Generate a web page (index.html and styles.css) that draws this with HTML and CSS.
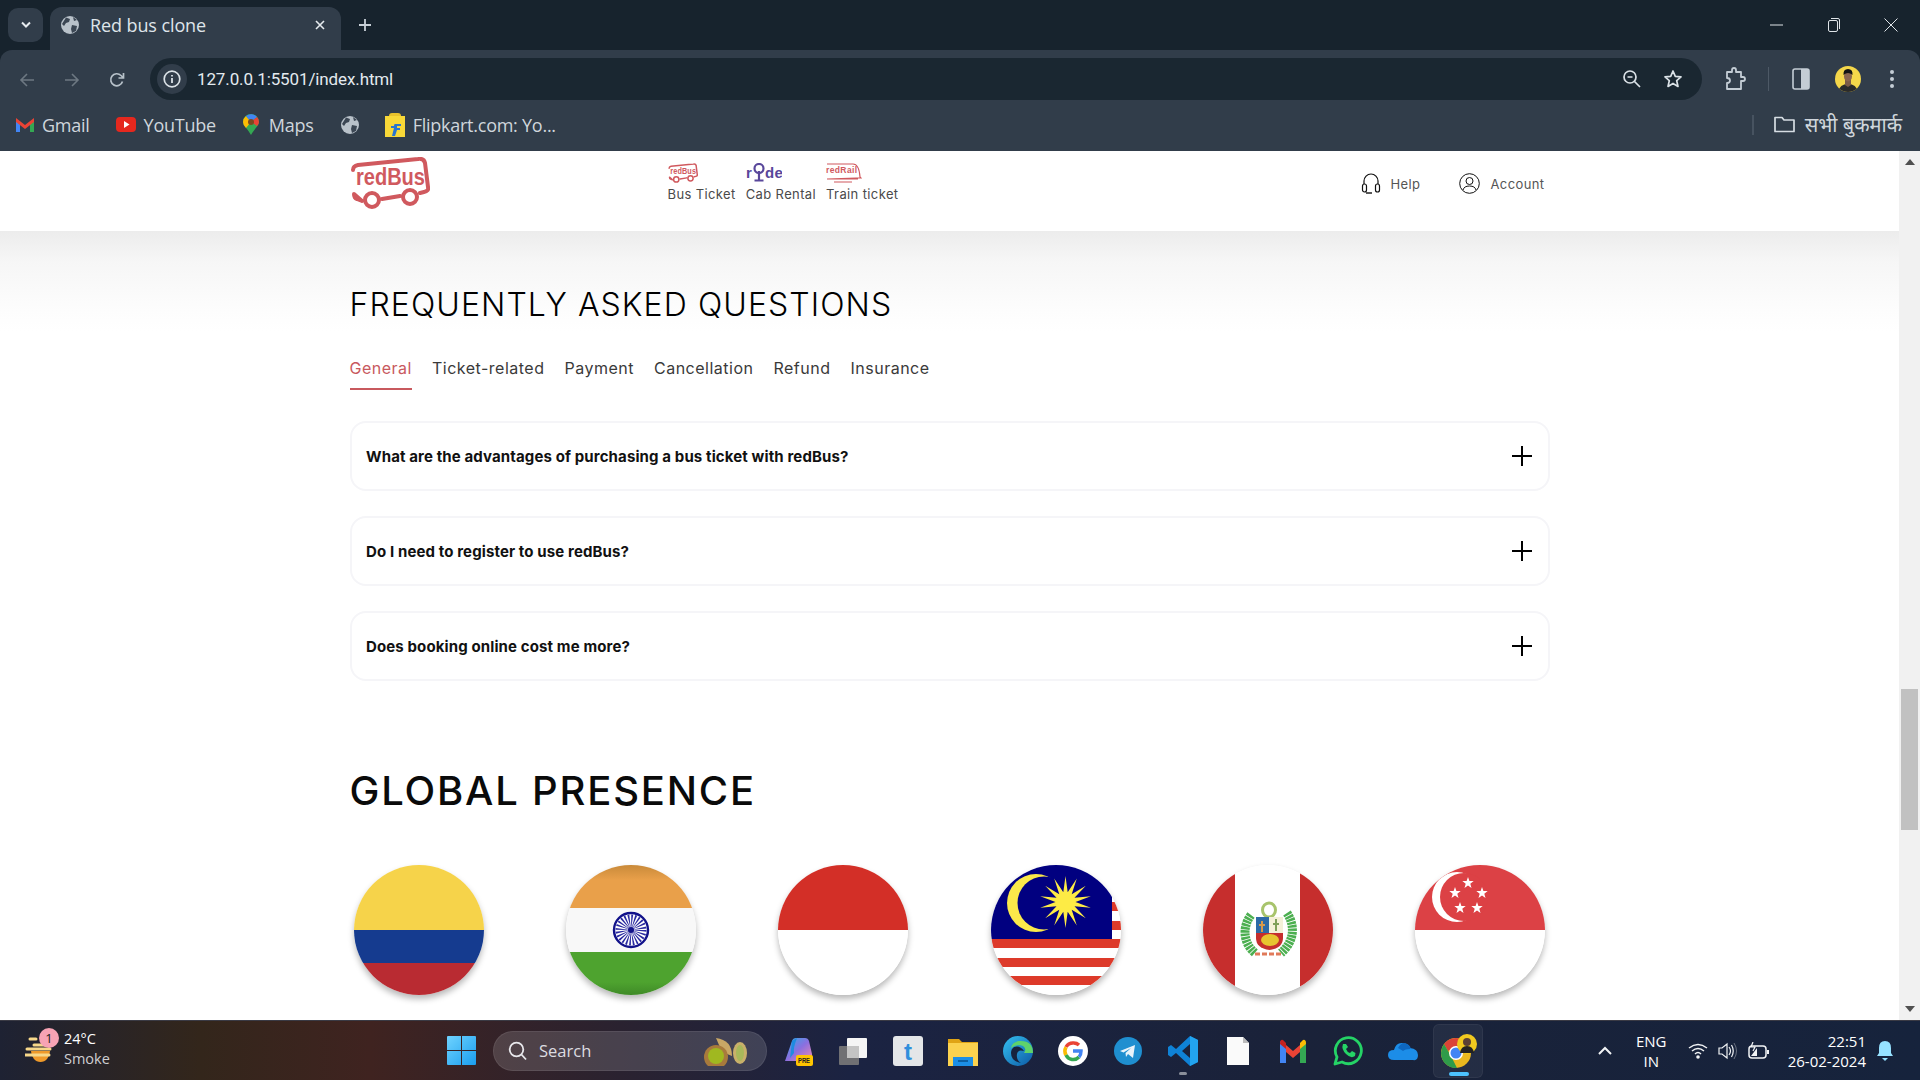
FILE: index.html
```html
<!DOCTYPE html>
<html lang="en">
<head>
<meta charset="utf-8">
<title>Red bus clone</title>
<link rel="stylesheet" href="styles.css">
</head>
<body>
<svg class="defs" width="0" height="0" aria-hidden="true">
  <symbol id="globe" viewBox="0 0 18 18">
    <circle cx="9" cy="9" r="9" fill="#b9c2ca"/>
    <path d="M5 1.5 9 3 8 6 5 7 3 10 1 8ZM11 9l5 1-1 5-4 2-1-4ZM12 1l4 3-3 1Z" fill="#3b4653"/>
  </symbol>
  <symbol id="busmark" viewBox="0 0 80 52">
    <path d="M3 13Q3 9 8 8L68 2Q74 1 75 6L78 30Q79 34 74 35L70 36M50 39 32 42M12 44 7 42Q4 41 4 37Z" fill="none" stroke="currentColor" stroke-width="4" stroke-linejoin="round" stroke-linecap="round"/>
    <circle cx="22" cy="43" r="7" fill="#fff" stroke="currentColor" stroke-width="4"/>
    <circle cx="60" cy="40" r="7" fill="#fff" stroke="currentColor" stroke-width="4"/>
    <text x="6" y="28" class="logo-text" textLength="69" lengthAdjust="spacingAndGlyphs">redBus</text>
  </symbol>
</svg>

<div class="tabstrip">
  <button class="tab-search" aria-label="Search tabs"><svg width="12" height="8" viewBox="0 0 12 8"><path d="M2 1.5 6 5.5 10 1.5" fill="none" stroke="#e6ebef" stroke-width="2"/></svg></button>
  <div class="tab">
    <svg class="ic18" width="18" height="18"><use href="#globe"/></svg>
    <span class="tab-title">Red bus clone</span>
    <svg class="tab-close" width="10" height="10" viewBox="0 0 10 10"><path d="M1 1 9 9M9 1 1 9" stroke="#e6ebef" stroke-width="1.6"/></svg>
  </div>
  <svg class="tab-new" width="14" height="14" viewBox="0 0 14 14"><path d="M7 1V13M1 7H13" stroke="#c8d0d7" stroke-width="1.8"/></svg>
  <div class="win-controls">
    <svg width="14" height="14" viewBox="0 0 14 14"><path d="M0 7H13" stroke="#dfe4e8" stroke-width="1"/></svg>
    <svg width="14" height="16" viewBox="0 0 14 16"><rect x="1.5" y="3.5" width="9" height="11" rx="1.5" fill="none" stroke="#dfe4e8"/><path d="M4 1.5H11Q12.5 1.5 12.5 3V12" fill="none" stroke="#dfe4e8"/></svg>
    <svg width="14" height="14" viewBox="0 0 14 14"><path d="M.5.5 13.5 13.5M13.5.5.5 13.5" stroke="#dfe4e8"/></svg>
  </div>
</div>

<div class="toolbar">
  <div class="nav-buttons">
    <svg width="16" height="16" viewBox="0 0 16 16"><path d="M15 8H2M8 2 2 8 8 14" fill="none" stroke="#6d7882" stroke-width="1.6"/></svg>
    <svg width="16" height="16" viewBox="0 0 16 16"><path d="M1 8H14M8 2 14 8 8 14" fill="none" stroke="#6d7882" stroke-width="1.6"/></svg>
    <svg width="16" height="16" viewBox="0 0 16 16"><path d="M13.5 9.5A6 6 0 1 1 12 3.5L14 5.5M14.5 1V6H9.5" fill="none" stroke="#b7c1c9" stroke-width="1.7"/></svg>
  </div>
  <div class="omnibox">
    <span class="site-info"><svg width="18" height="18" viewBox="0 0 18 18"><circle cx="9" cy="9" r="7.8" fill="none" stroke="#dbe2e7" stroke-width="1.7"/><path d="M9 8V13M9 5V6.6" stroke="#dbe2e7" stroke-width="1.8"/></svg></span>
    <span class="url">127.0.0.1:5501/index.html</span>
    <span class="omni-end">
      <svg width="20" height="20" viewBox="0 0 20 20"><circle cx="8" cy="8" r="6" fill="none" stroke="#dbe2e7" stroke-width="1.7"/><path d="M5.5 8H10.5M12.5 12.5 18 18" stroke="#dbe2e7" stroke-width="1.7"/></svg>
      <svg width="20" height="20" viewBox="0 0 20 20"><path d="M10 2 12.3 7.4 18 7.9 13.7 11.7 15 17.4 10 14.4 5 17.4 6.3 11.7 2 7.9 7.7 7.4Z" fill="none" stroke="#dbe2e7" stroke-width="1.7" stroke-linejoin="round"/></svg>
    </span>
  </div>
  <div class="tool-end">
    <svg class="t-ext" width="22" height="24" viewBox="0 0 22 24"><path d="M2 5H7V3Q7 1 9 1T11 3V5H16V10H18Q20 10 20 12T18 14H16V22H2V16Q5 16 5 13.5T2 11Z" fill="none" stroke="#c4cdd5" stroke-width="1.8" stroke-linejoin="round"/></svg>
    <span class="t-sep"></span>
    <svg class="t-side" width="18" height="22" viewBox="0 0 18 22"><rect x="1" y="1" width="16" height="20" rx="2" fill="none" stroke="#c4cdd5" stroke-width="1.6"/><rect x="9" y="1" width="8" height="20" fill="#c4cdd5"/></svg>
    <svg class="t-avatar" width="26" height="26" viewBox="0 0 26 26"><defs><clipPath id="avc"><circle cx="13" cy="13" r="13"/></clipPath></defs><g clip-path="url(#avc)"><rect width="26" height="26" fill="#f5d74a"/><path d="M3 27Q4 18 13 18T23 27Z" fill="#2a2a2a"/><path d="M10 13H16V19L13 21 10 19Z" fill="#7a5a48"/><ellipse cx="13" cy="10.500" rx="4" ry="5" fill="#8a6650"/><path d="M8.500 9Q8 3 13 3T17.500 9Q13 5 8.500 9Z" fill="#141414"/></g></svg>
    <svg class="t-menu" width="6" height="22" viewBox="0 0 6 22"><circle cx="3" cy="4" r="2" fill="#c4cdd5"/><circle cx="3" cy="11" r="2" fill="#c4cdd5"/><circle cx="3" cy="18" r="2" fill="#c4cdd5"/></svg>
  </div>
</div>

<div class="bookmarks">
  <span class="bm bm-gmail">
    <svg width="18" height="15" viewBox="0 0 18 15"><path d="M0 2V15H4V6Z" fill="#4285f4"/><path d="M18 2V15H14V6Z" fill="#34a853"/><path d="M0 1 9 8 18 1V5L9 12 0 5Z" fill="#ea4335"/></svg>
    Gmail</span>
  <span class="bm bm-yt">
    <svg width="20" height="15" viewBox="0 0 20 15"><rect width="20" height="15" rx="4" fill="#e5281e"/><path d="M8 4V11L13.5 7.5Z" fill="#fff"/></svg>
    YouTube</span>
  <span class="bm bm-maps">
    <svg width="16" height="21" viewBox="0 0 16 21"><path d="M8 21C5 15 0 12 0 8A8 8 0 0 1 16 8C16 12 11 15 8 21Z" fill="#34a853"/><path d="M0 8A8 8 0 0 1 3 2L8 8 3 14Q0 11 0 8Z" fill="#fbbc04"/><path d="M3 2A8 8 0 0 1 14 3L8 8Z" fill="#4285f4"/><path d="M14 3Q16 5 16 8 16 10 14 12L8 8Z" fill="#ea4335"/><circle cx="8" cy="8" r="3" fill="#7a4a20"/></svg>
    Maps</span>
  <svg class="bm-globe" width="18" height="18"><use href="#globe"/></svg>
  <span class="bm bm-flip">
    <svg width="20" height="24" viewBox="0 0 20 24"><rect y="3" width="20" height="21" fill="#f8d838"/><path d="M4 3Q4 0 7 0H13Q16 0 16 3Z" fill="#e9c22c"/><path d="M10 11H16V13H12V15H15V17H12L10 23H7L9 15H6V13H9Q9 11 10 11Z" fill="#2874d0"/></svg>
    Flipkart.com: Yo...</span>
  <span class="bm-spacer"></span>
  <span class="bm-sep"></span>
  <span class="bm bm-all">
    <svg width="21" height="17" viewBox="0 0 21 17"><path d="M1 15.5V1.500H8L10 4H20V15.500Z" fill="none" stroke="#d6dde3" stroke-width="1.7" stroke-linejoin="round"/></svg>
    सभी बुकमार्क</span>
</div>

<div class="viewport">
  <div class="page">
    <header class="site-header">
      <div class="container header-row">
        <svg class="logo" width="80" height="52"><use href="#busmark"/></svg>
        <nav class="products">
          <a class="product"><svg class="busicon" width="30" height="20"><use href="#busmark"/></svg><span>Bus Ticket</span></a>
          <a class="product">
            <svg class="prod-ic" width="36" height="20" viewBox="0 0 36 20"><text x="0" y="15" class="ryde">r</text><circle cx="13" cy="5.500" r="4.500" fill="none" stroke="#59479b" stroke-width="2.200"/><path d="M13 8V17.500M8.500 17.500H17.500" stroke="#59479b" stroke-width="2.200"/><text x="19" y="15" class="ryde">de</text></svg>
            <span>Cab Rental</span></a>
          <a class="product">
            <svg class="prod-ic" width="36" height="20" viewBox="0 0 36 20"><path d="M1 1H27Q33 1 34 14L35 15H30L1 16M3 16H32M8 19H26" fill="none" stroke="#d0595e" stroke-width="1.2"/><text x="0" y="10" class="rail">redRail</text></svg>
            <span>Train ticket</span></a>
        </nav>
        <div class="header-actions">
          <a class="action"><svg width="20" height="21" viewBox="0 0 20 21"><path d="M3 11V8A7 7 0 0 1 17 8V11" fill="none" stroke="#111" stroke-width="1.2"/><rect x="1.500" y="11" width="4" height="8" rx="2" fill="none" stroke="#111" stroke-width="1.2"/><rect x="14.500" y="11" width="4" height="8" rx="2" fill="none" stroke="#111" stroke-width="1.2"/><path d="M5 20H11" stroke="#111" stroke-width="1.4"/></svg><span>Help</span></a>
          <a class="action"><svg width="21" height="21" viewBox="0 0 21 21"><circle cx="10.500" cy="10.500" r="9.800" fill="none" stroke="#111" stroke-width="1"/><circle cx="10.500" cy="8" r="3.500" fill="none" stroke="#111" stroke-width="1"/><path d="M4 17Q5 13 10.500 13T17 17" fill="none" stroke="#111"/></svg><span>Account</span></a>
        </div>
      </div>
    </header>

    <main class="content">
      <section class="container faq">
        <h2 class="faq-title">FREQUENTLY ASKED QUESTIONS</h2>
        <ul class="faq-tabs">
          <li class="faq-tab is-active">General</li>
          <li class="faq-tab">Ticket-related</li>
          <li class="faq-tab">Payment</li>
          <li class="faq-tab">Cancellation</li>
          <li class="faq-tab">Refund</li>
          <li class="faq-tab">Insurance</li>
        </ul>
        <div class="faq-list">
          <div class="faq-item"><span>What are the advantages of purchasing a bus ticket with redBus?</span><svg width="20" height="20" viewBox="0 0 20 20"><path d="M10 0V20M0 10H20" stroke="#000" stroke-width="2"/></svg></div>
          <div class="faq-item"><span>Do I need to register to use redBus?</span><svg width="20" height="20" viewBox="0 0 20 20"><path d="M10 0V20M0 10H20" stroke="#000" stroke-width="2"/></svg></div>
          <div class="faq-item"><span>Does booking online cost me more?</span><svg width="20" height="20" viewBox="0 0 20 20"><path d="M10 0V20M0 10H20" stroke="#000" stroke-width="2"/></svg></div>
        </div>
      </section>

      <section class="container global">
        <h2 class="global-title">GLOBAL PRESENCE</h2>
        <div class="flags">
          <svg class="flag" viewBox="0 0 130 130"><rect width="130" height="65" fill="#f6d34a"/><rect y="65" width="130" height="33" fill="#153b8f"/><rect y="98" width="130" height="32" fill="#b92b32"/></svg>
          <svg class="flag" viewBox="0 0 130 130">
            <defs>
              <linearGradient id="saffron" x1="0" y1="0" x2="0" y2="1"><stop offset="0" stop-color="#c98a3a"/><stop offset=".35" stop-color="#e9a04a"/></linearGradient>
              <linearGradient id="greenb" x1="0" y1="0" x2="0" y2="1"><stop offset=".7" stop-color="#4ea32f"/><stop offset="1" stop-color="#3f8a27"/></linearGradient>
            </defs>
            <rect width="130" height="43" fill="url(#saffron)"/><rect y="43" width="130" height="44" fill="#f8f8f8"/><rect y="87" width="130" height="43" fill="url(#greenb)"/>
            <circle cx="65" cy="65" r="17" fill="#fff" stroke="#12128a" stroke-width="2.4"/>
            <circle cx="65" cy="65" r="8" fill="none" stroke="#2a2aa0" stroke-width="15" stroke-dasharray="1 1.09"/>
            <circle cx="65" cy="65" r="3" fill="#12128a"/>
          </svg>
          <svg class="flag" viewBox="0 0 130 130"><rect width="130" height="65" fill="#d32f27"/><rect y="65" width="130" height="65" fill="#fff"/></svg>
          <svg class="flag" viewBox="0 0 130 130">
            <rect width="130" height="130" fill="#fff"/>
            <rect x="121" y="37" width="9" height="9" fill="#dd3a2a"/><rect x="121" y="56" width="9" height="9" fill="#dd3a2a"/>
            <rect y="74" width="130" height="9" fill="#dd3a2a"/><rect y="93" width="130" height="9" fill="#dd3a2a"/><rect y="111" width="130" height="9" fill="#dd3a2a"/>
            <rect width="121" height="74" fill="#010080"/>
            <circle cx="45" cy="38" r="29" fill="#fbe94a"/><circle cx="53" cy="38" r="26.500" fill="#010080"/>
            <polygon transform="translate(74.500 37)" fill="#fdeb45" points="0,-26 2.200,-9.700 11.300,-23.400 6.200,-7.800 20.300,-16.200 9,-4.300 25.300,-5.800 10,0 25.300,5.800 9,4.300 20.300,16.200 6.200,7.800 11.300,23.400 2.200,9.700 0,26 -2.200,9.700 -11.300,23.400 -6.200,7.800 -20.300,16.200 -9,4.300 -25.300,5.800 -10,0 -25.300,-5.800 -9,-4.300 -20.300,-16.200 -6.200,-7.800 -11.300,-23.400 -2.200,-9.700"/>
          </svg>
          <svg class="flag" viewBox="0 0 130 130">
            <rect width="130" height="130" fill="#fff"/>
            <rect width="32" height="130" fill="#c62e2d"/><rect x="97" width="33" height="130" fill="#c62e2d"/>
            <path d="M48 50C39 62 40 78 52 88" fill="none" stroke="#4caf50" stroke-width="9" stroke-dasharray="2.500 .8"/>
            <path d="M84 48C92 60 92 76 78 88" fill="none" stroke="#4caf50" stroke-width="9" stroke-dasharray="2.500 .8"/>
            <ellipse cx="66" cy="45" rx="6.500" ry="7" fill="none" stroke="#a8c46c" stroke-width="3"/>
            <rect x="53" y="52" width="13" height="16" fill="#2d6aa6"/><rect x="66" y="52" width="14" height="16" fill="#f4f0d8"/>
            <path d="M59 56V67M62 60H56" stroke="#d99a4a" stroke-width="2"/>
            <path d="M73 54V66M70 59H76" stroke="#7f9f5a" stroke-width="2"/>
            <path d="M53 68H80V73Q80 83 66.500 85 53 83 53 73Z" fill="#c62e2d"/>
            <ellipse cx="67" cy="75" rx="9" ry="6" fill="#e7c42f"/>
            <path d="M52 89H80" stroke="#e07a5a" stroke-width="3" stroke-dasharray="5 2"/>
          </svg>
          <svg class="flag" viewBox="0 0 130 130">
            <rect width="130" height="65" fill="#dc4145"/><rect y="65" width="130" height="65" fill="#fff"/>
            <circle cx="42" cy="32" r="25" fill="#fff"/><circle cx="49" cy="32" r="24" fill="#dc4145"/>
            <g fill="#fff">
              <polygon transform="translate(53 18)" points="0,-6 1.400,-2 5.700,-1.900 2.300,.8 3.500,4.900 0,2.500 -3.500,4.900 -2.300,.8 -5.700,-1.900 -1.400,-2"/>
              <polygon transform="translate(40 28)" points="0,-6 1.400,-2 5.700,-1.900 2.300,.8 3.500,4.900 0,2.500 -3.500,4.900 -2.300,.8 -5.700,-1.900 -1.400,-2"/>
              <polygon transform="translate(67 28)" points="0,-6 1.400,-2 5.700,-1.900 2.300,.8 3.500,4.900 0,2.500 -3.500,4.900 -2.300,.8 -5.700,-1.900 -1.400,-2"/>
              <polygon transform="translate(45 43)" points="0,-6 1.400,-2 5.700,-1.900 2.300,.8 3.500,4.900 0,2.500 -3.500,4.900 -2.300,.8 -5.700,-1.900 -1.400,-2"/>
              <polygon transform="translate(62 43)" points="0,-6 1.400,-2 5.700,-1.900 2.300,.8 3.500,4.900 0,2.500 -3.500,4.900 -2.300,.8 -5.700,-1.900 -1.400,-2"/>
            </g>
          </svg>
        </div>
      </section>
    </main>
  </div>

  <div class="scrollbar">
    <svg class="sb-arrow" width="10" height="6" viewBox="0 0 10 6"><path d="M5 0 10 6H0Z" fill="#505050"/></svg>
    <div class="sb-track"><div class="sb-thumb"></div></div>
    <svg class="sb-arrow" width="10" height="6" viewBox="0 0 10 6"><path d="M5 6 0 0H10Z" fill="#505050"/></svg>
  </div>
</div>

<footer class="taskbar">
  <div class="weather">
    <svg class="w-icon" width="30" height="28" viewBox="0 0 30 28"><path d="M6 14A9.500 11 0 0 0 25 14Z" fill="#ef9a2a"/><path d="M5 2H11M9 8H26M2 12H25M0 18H24" stroke="#f7d88a" stroke-width="3" stroke-linecap="round"/></svg>
    <span class="w-badge">1</span>
    <div class="w-text"><span class="w-temp">24°C</span><span class="w-desc">Smoke</span></div>
  </div>
  <svg class="start" width="29" height="29" viewBox="0 0 29 29"><defs><linearGradient id="win" x1="0" y1="0" x2="1" y2="1"><stop offset="0" stop-color="#6fd3ff"/><stop offset="1" stop-color="#1a9dee"/></linearGradient></defs><path d="M0 1Q0 0 1 0H14V14H0ZM15 0H28Q29 0 29 1V14H15ZM0 15H14V29H1Q0 29 0 28ZM15 15H29V28Q29 29 28 29H15Z" fill="url(#win)"/></svg>
  <div class="search">
    <svg width="20" height="20" viewBox="0 0 20 20"><circle cx="8.500" cy="8.500" r="6.800" fill="none" stroke="#e8e8ec" stroke-width="1.800"/><path d="M13 13 18 18.500" stroke="#e8e8ec" stroke-width="1.800"/></svg>
    <span class="search-label">Search</span>
    <svg class="nuts" width="50" height="30" viewBox="0 0 50 30"><ellipse cx="38" cy="17" rx="7" ry="11" fill="#c9b06a"/><ellipse cx="38" cy="17" rx="4" ry="8" fill="#a8b85a"/><path d="M14 2Q30 4 30 20L20 16Z" fill="#c9a765"/><circle cx="14" cy="21" r="12" fill="#a87a3c"/><circle cx="14" cy="20" r="8" fill="#a0b820"/></svg>
  </div>
  <div class="pins">
    <svg width="30" height="30" viewBox="0 0 30 30"><defs><linearGradient id="cop" x1="0" y1="0" x2="1" y2="1"><stop offset="0" stop-color="#2bb0e8"/><stop offset=".5" stop-color="#8a6fe0"/><stop offset="1" stop-color="#f08ab0"/></linearGradient></defs><path d="M2 25 9 5Q10 2 13 2H22Q25 2 26 5L29 18Q30 25 24 25Z" fill="url(#cop)"/><path d="M14 2Q10 12 11 17L7 22 9 5Z" fill="#1f8be0"/><rect x="13" y="19" width="17" height="11" rx="2" fill="#ffc400"/><text x="15" y="27" class="pre" textLength="12" lengthAdjust="spacingAndGlyphs">PRE</text></svg>
    <svg width="30" height="30" viewBox="0 0 30 30"><rect x="9" y="2" width="20" height="20" rx="1" fill="#f5f5f5"/><rect x="1" y="10" width="20" height="19" rx="1" fill="#777" opacity=".92"/><rect x="9" y="10" width="12" height="12" fill="#c4c4c4"/></svg>
    <svg width="30" height="30" viewBox="0 0 30 30"><rect width="30" height="30" rx="3" fill="#e4e6e8"/><text x="15" y="24" class="tw">t</text></svg>
    <svg width="30" height="30" viewBox="0 0 30 30"><path d="M0 3H11L14 6H30V9H0Z" fill="#e0a415"/><rect y="7" width="30" height="23" fill="#fbd24f"/><path d="M5 30V21H25V30Z" fill="#1c8fe6"/><path d="M10 25H20" stroke="#07508c" stroke-width="1.500"/></svg>
    <svg width="30" height="30" viewBox="0 0 30 30"><defs><linearGradient id="edge" x1="0" y1="0" x2="1" y2="1"><stop offset="0" stop-color="#35c1f1"/><stop offset="1" stop-color="#0c59a4"/></linearGradient></defs><circle cx="15" cy="15" r="15" fill="url(#edge)"/><path d="M30 17Q30 4 16 5 9 6 8 12 14 7 20 10 24 13 21 17Z" fill="#5fd36b"/><path d="M8 17Q8 25 18 27 13 24 14 18 15 13 21 15 17 9 11 11 8 13 8 17Z" fill="#17233d"/></svg>
    <svg width="30" height="30" viewBox="0 0 30 30"><circle cx="15" cy="15" r="15" fill="#fff"/><path d="M15 7A8 8 0 0 0 8 11" fill="none" stroke="#ea4335" stroke-width="3.500"/><path d="M8 11A8 8 0 0 0 8 19" fill="none" stroke="#fbbc05" stroke-width="3.500"/><path d="M8 19A8 8 0 0 0 21 21" fill="none" stroke="#34a853" stroke-width="3.500"/><path d="M15 7A8 8 0 0 1 21 9" fill="none" stroke="#ea4335" stroke-width="3.500"/><path d="M15 15H23Q23 19 21 21" fill="none" stroke="#4285f4" stroke-width="3.500"/></svg>
    <svg width="30" height="30" viewBox="0 0 30 30"><circle cx="15" cy="15" r="14" fill="#1f8fd0"/><path d="M7 15 22 9 20 22 15 18 13 21 12.500 17 18 12 10.500 16.500Z" fill="#e8f3fa"/></svg>
    <span class="pin-vs"><svg width="30" height="30" viewBox="0 0 30 30"><path d="M22 0 30 4V26L22 30 8 17 3 21 0 19V11L3 9 8 13ZM22 8 14 15 22 22Z" fill="#0f82d6" fill-rule="evenodd"/><path d="M22 0 30 4V26L22 30Z" fill="#22a4ef"/></svg></span>
    <svg width="30" height="30" viewBox="0 0 30 30"><path d="M4 1H20L26 7V29H4Z" fill="#fafafa"/><path d="M20 1V7H26Z" fill="#bcbcbc"/></svg>
    <svg width="30" height="30" viewBox="0 0 30 30"><path d="M2 5V27H8V11Z" fill="#4285f4"/><path d="M28 5V27H22V11Z" fill="#34a853"/><path d="M8 9 15 15 22 9V16L15 22 8 16Z" fill="#ea4335"/><path d="M2 8Q2 3 5 4L8 7V13Z" fill="#c5221f"/><path d="M28 8Q28 3 25 4L22 7V13Z" fill="#fbbc04"/></svg>
    <svg width="30" height="30" viewBox="0 0 30 30"><path d="M2 28 4 21A13 13 0 1 1 9 26Z" fill="none" stroke="#25d366" stroke-width="2.800" stroke-linejoin="round"/><path d="M10 8Q8 13 13 18T22 20L22.500 17 19 15 17 17Q14 16 13 13L15 11 13 8Z" fill="#25d366"/></svg>
    <svg width="30" height="30" viewBox="0 0 30 30"><path d="M6 24Q0 24 0 19T6 14Q8 6 15 7T22 12Q30 13 30 19T25 24Z" fill="#1c8de8"/><path d="M10 12Q14 5 19 8T22 13Q17 13 15 15 12 13 10 12Z" fill="#0e67c0"/></svg>
    <div class="pin-chrome">
      <svg width="42" height="34" viewBox="0 0 42 34"><circle cx="19" cy="19" r="15" fill="#e9b71e"/><path d="M19 4A15 15 0 0 1 32 12H19L11 17 7 10A15 15 0 0 1 19 4Z" fill="#db4437"/><path d="M4 19A15 15 0 0 1 7 10L14 22 20 34A15 15 0 0 1 4 19Z" fill="#2f9b4a"/><circle cx="19" cy="19" r="7" fill="#fff"/><circle cx="19" cy="19" r="5.500" fill="#4285f4"/><circle cx="30" cy="10" r="10" fill="#f0c91f"/><circle cx="30" cy="8" r="4" fill="#5a4034"/><path d="M23 19Q24 12 30 12T37 19Z" fill="#222"/></svg>
    </div>
  </div>
  <div class="tray">
    <svg class="tr-chev" width="16" height="10" viewBox="0 0 16 10"><path d="M2 8 8 2 14 8" fill="none" stroke="#f1f3f5" stroke-width="2"/></svg>
    <div class="lang"><span>ENG</span><span>IN</span></div>
    <svg width="20" height="16" viewBox="0 0 20 16"><path d="M1 5Q10-2 19 5M4 8Q10 3 16 8M7 11Q10 8 13 11" fill="none" stroke="#f1f3f5" stroke-width="1.500"/><circle cx="10" cy="14" r="1.800" fill="#f1f3f5"/></svg>
    <svg width="20" height="18" viewBox="0 0 20 18"><path d="M1 6V12H4L9 16V2L4 6Z" fill="none" stroke="#f1f3f5" stroke-width="1.200"/><path d="M11 5Q14 9 11 13M13.500 3Q17 9 13.500 15" fill="none" stroke="#f1f3f5" stroke-width="1.200"/><path d="M16 1Q21 9 16 17" fill="none" stroke="#6a7180" stroke-width="1"/></svg>
    <svg width="22" height="18" viewBox="0 0 22 18"><rect x="1" y="4" width="17" height="12" rx="3" fill="none" stroke="#f1f3f5" stroke-width="1.500"/><path d="M19 8H21V12H19Z" fill="#f1f3f5"/><path d="M3 14 9 6V14Z" fill="#f1f3f5"/><path d="M5 0 3 5H7L5 9" fill="none" stroke="#f1f3f5" stroke-width="1.200"/></svg>
    <div class="clock"><span>22:51</span><span>26-02-2024</span></div>
    <svg class="bell" width="16" height="20" viewBox="0 0 16 20"><path d="M8 0Q14 0 14 7V12L16 15H0L2 12V7Q2 0 8 0Z" fill="#96e2ff"/><path d="M5 17H11L8 20Z" fill="#96e2ff"/></svg>
  </div>
</footer>
</body>
</html>
```
FILE: styles.css
```css
* { box-sizing: border-box; }
html, body { margin: 0; padding: 0; }
body {
  width: 1920px;
  height: 1080px;
  overflow: hidden;
  display: flex;
  flex-direction: column;
  background: #17232d;
  font-family: "Open Sans", "Noto Sans", "DejaVu Sans", sans-serif;
}
svg { display: block; flex: none; }
.defs { position: absolute; }
.logo-text { font: 700 23px "Liberation Sans", sans-serif; fill: currentColor; }

/* Browser tab strip */
.tabstrip { height: 50px; display: flex; align-items: flex-end; padding-left: 8px; background: #17232d; flex: none; }
.tab-search { width: 35px; height: 34px; margin-bottom: 8px; border: 0; padding: 0; border-radius: 10px; background: #313d4a; display: flex; align-items: center; justify-content: center; }
.tab { position: relative; width: 291px; height: 43px; margin-left: 7px; padding: 0 16px 7px 11px; display: flex; align-items: center; background: #313d4a; border-radius: 12px 12px 0 0; color: #dfe5ea; }
.tab-title { margin-left: 11px; font-size: 18px; letter-spacing: -.1px; line-height: 24px; flex: 1; }
.tab-new { margin: 0 0 18px 17px; }
.win-controls { margin-left: auto; margin-right: 22px; height: 50px; display: flex; align-items: center; gap: 43px; }

/* Toolbar */
.toolbar { height: 50px; padding-left: 19px; display: flex; align-items: flex-start; background: #313d4a; border-radius: 12px 12px 0 0; flex: none; }
.nav-buttons { display: flex; gap: 29px; width: 131px; padding-top: 22px; }
.omnibox { width: 1552px; height: 42px; margin-top: 8px; padding: 0 19px 0 7px; background: #1a2731; border-radius: 21px; display: flex; align-items: center; color: #e3eaef; }
.site-info { width: 30px; height: 30px; border-radius: 50%; background: #313d4a; display: flex; align-items: center; justify-content: center; }
.url { margin-left: 10px; font-family: Roboto, sans-serif; font-size: 17px; letter-spacing: -.12px; }
.omni-end { margin-left: auto; display: flex; align-items: center; gap: 21px; }
.tool-end { position: relative; flex: 1; height: 42px; margin-top: 8px; display: flex; align-items: center; }
.t-ext { margin-left: 23px; }
.t-sep { width: 1px; height: 24px; margin-left: 21px; background: #4d5966; }
.t-side { margin-left: 23px; }
.t-avatar { margin-left: 25px; }
.t-menu { margin-left: 28px; }

/* Bookmarks */
.bookmarks { height: 51px; padding: 0 18px 2px 16px; display: flex; align-items: center; background: #313d4a; color: #cfd6dc; font-size: 18px; letter-spacing: -.25px; flex: none; }
.bm { display: flex; align-items: center; gap: 8px; white-space: nowrap; }
.bm-yt { margin-left: 26px; }
.bm-maps { margin-left: 27px; gap: 10px; }
.bm-globe { margin-left: 27px; }
.bm-flip { margin-left: 26px; }
.bm-spacer { flex: 1; }
.bm-sep { width: 2px; height: 20px; background: #475360; margin-right: 20px; }
.bm-all { gap: 10px; font-size: 20px; letter-spacing: 0; font-family: "Noto Sans", "Noto Serif", "DejaVu Sans", sans-serif; }

/* Page viewport */
.viewport { height: 869px; display: flex; background: #fff; flex: none; }
.page { flex: 1; min-width: 0; font-family: Inter, "Open Sans", sans-serif; color: #000; overflow: hidden; }
.container { width: 1200px; margin: 0 auto; }
.site-header { height: 80px; background: #fff; }
.header-row { height: 80px; display: flex; align-items: flex-start; }
.logo { color: #d0595e; margin-top: 6px; }
.products { margin-left: 238px; margin-top: 12px; display: flex; gap: 10px; }
.product { display: flex; flex-direction: column; gap: 3px; font-size: 13px; letter-spacing: .38px; color: #4a4a4a; }
.busicon { color: #d0595e; }
.ryde { font: 700 15px "Liberation Sans", sans-serif; fill: #59479b; }
.rail { font: 700 8.500px "Liberation Sans", sans-serif; fill: #d0595e; }
.header-actions { margin-left: auto; display: flex; gap: 39px; margin-top: 22px; margin-right: 5px; }
.action { display: flex; align-items: center; gap: 10px; font-size: 13px; letter-spacing: .4px; color: #555; }

.content { height: 789px; background: linear-gradient(#ececec 0, #f6f6f6 30px, #fdfdfd 80px, #fff 100px); }
.faq { padding-top: 54px; }
.faq-title { margin: 0; font-size: 32px; line-height: 40px; font-weight: 300; letter-spacing: 1.08px; }
.faq-tabs { list-style: none; margin: 26px 0 0; padding: 0; display: flex; gap: 20px; }
.faq-tab { height: 39px; line-height: 34px; font-size: 16px; letter-spacing: .5px; color: #3a3a3a; }
.faq-tab.is-active { color: #c8595e; border-bottom: 2px solid #c8595e; }
.faq-list { margin-top: 31px; display: flex; flex-direction: column; gap: 25px; }
.faq-item { height: 70px; padding: 0 15.500px 0 14.500px; display: flex; align-items: center; justify-content: space-between; background: #fff; border: 2px solid #f5f5f8; border-radius: 16px; font-size: 15px; font-weight: 700; letter-spacing: .12px; color: #111; }
.global { padding-top: 86px; }
.global-title { margin: 0; font-size: 40px; line-height: 48px; font-weight: 500; letter-spacing: 1.8px; color: #0a0a0a; }
.flags { margin-top: 50px; padding: 0 4.500px; display: flex; justify-content: space-between; }
.flag { width: 130px; height: 130px; border-radius: 50%; box-shadow: 0 4px 6px rgba(0,0,0,.28); background: #fff; }

/* Scrollbar */
.scrollbar { width: 21px; background: #f1f1f1; display: flex; flex-direction: column; align-items: center; padding: 8px 0; }
.sb-track { flex: 1; width: 17px; padding-top: 524px; }
.sb-thumb { height: 141px; background: #c1c1c1; }

/* Windows taskbar */
.taskbar { height: 60px; display: flex; align-items: center; flex: none; color: #fff; border-top: 1px solid #3a3a44; background: linear-gradient(90deg, #1e2233 0, #33261b 200px, #3f2320 370px, #2a2230 620px, #1b2342 850px, #1a2239 1300px, #16233c 1920px); }
.weather { position: relative; width: 447px; height: 60px; padding-left: 25px; display: flex; align-items: center; flex: none; }
.w-badge { position: absolute; left: 39px; top: 7px; width: 20px; height: 20px; border-radius: 50%; background: #f7a3b4; color: #222; font-size: 13px; line-height: 20px; text-align: center; }
.w-text { position: absolute; left: 64px; top: 8px; display: flex; flex-direction: column; font-size: 14.500px; line-height: 20px; }
.w-desc { color: #cfcfd2; }
.start { margin-right: 17px; }
.search { width: 274px; height: 40px; padding: 0 14px; border-radius: 20px; display: flex; align-items: center; background: rgba(255,255,255,.14); border: 1px solid rgba(255,255,255,.08); }
.search-label { margin-left: 11px; font-size: 16.500px; color: #dcdce0; }
.nuts { margin-left: auto; }
.pins { margin-left: 16px; display: flex; align-items: center; gap: 25px; }
.pre { font: 700 8px "Liberation Sans", sans-serif; fill: #222; }
.tw { font: 700 24px "Liberation Sans", sans-serif; fill: #2f8fdc; text-anchor: middle; }
.pin-vs { position: relative; }
.pin-vs::after { content: ""; position: absolute; left: 11px; bottom: -9px; width: 8px; height: 3px; border-radius: 2px; background: #8a8f9a; }
.pin-chrome { position: relative; width: 50px; height: 54px; margin: 0 -10px; background: rgba(255,255,255,.05); border: 1px solid rgba(255,255,255,.05); border-radius: 6px; display: flex; align-items: center; justify-content: center; }
.pin-chrome::after { content: ""; position: absolute; left: 15px; bottom: 1px; width: 20px; height: 4px; border-radius: 2px; background: #4cc2ff; }
.tray { margin-left: auto; padding-right: 27px; display: flex; align-items: center; font-size: 15px; }
.tr-chev { margin-right: 18px; }
.lang { width: 40px; margin-right: 17px; display: flex; flex-direction: column; align-items: center; line-height: 20px; }
.tray > svg + svg { margin-left: 10px; }
.clock { margin-left: 17.500px; display: flex; flex-direction: column; align-items: flex-end; line-height: 20px; }
.tray > .bell { margin-left: 11px; }
```
